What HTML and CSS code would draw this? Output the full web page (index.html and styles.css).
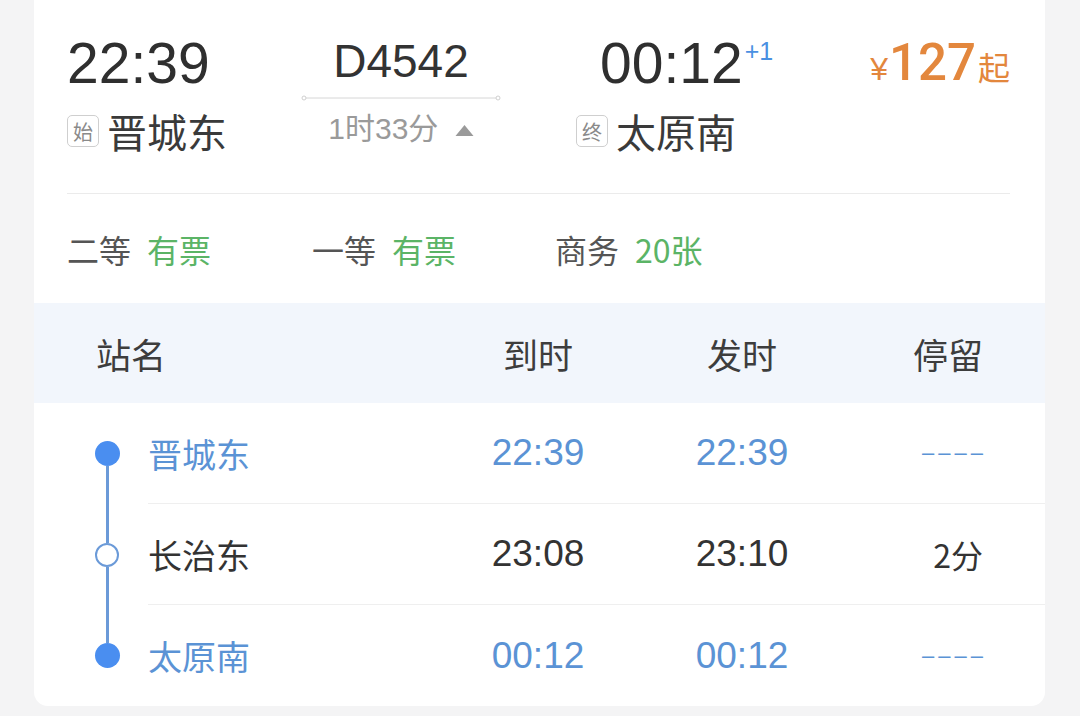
FILE: index.html
```html
<!DOCTYPE html>
<html lang="zh-CN">
<head>
    <meta charset="UTF-8">
    <meta name="viewport" content="width=device-width, initial-scale=1.0">
    <title>D4542 经停信息</title>
    <link rel="stylesheet" href="styles.css">
</head>
<body>

<div class="card">
    <div class="summary">
        <div class="trip">
            <div class="end">
                <div class="time">22:39</div>
                <div class="station"><span class="tag">始</span>晋城东</div>
            </div>
            <div class="mid">
                <div class="train">D4542</div>
                <svg class="track" width="200" height="6" viewBox="0 0 200 6">
                    <line x1="3" y1="3" x2="197" y2="3" stroke="#d6d6d6" stroke-width="1"/>
                    <circle cx="3" cy="3" r="2" fill="#fff" stroke="#d0d0d0" stroke-width="1"/>
                    <circle cx="197" cy="3" r="2" fill="#fff" stroke="#d0d0d0" stroke-width="1"/>
                </svg>
                <div class="dur">1时33分
                    <svg class="arrow" width="19" height="13" viewBox="0 0 19 13"><polygon points="9.5,1 18.5,12 0.5,12" fill="#9a9a9a"/></svg>
                </div>
            </div>
            <div class="end arrive">
                <div class="time">00:12<sup>+1</sup></div>
                <div class="station"><span class="tag">终</span>太原南</div>
            </div>
            <div class="price"><span class="yen">¥</span><span class="amount">127</span><span class="from">起</span></div>
        </div>

        <div class="seats">
            <div class="seat">二等<span class="left">有票</span></div>
            <div class="seat">一等<span class="left">有票</span></div>
            <div class="seat">商务<span class="left">20张</span></div>
        </div>
    </div>

    <div class="stops-head">
        <div>站名</div>
        <div class="c">到时</div>
        <div class="c">发时</div>
        <div class="r">停留</div>
    </div>

    <div class="stop first main">
        <div class="rail"><i class="seg"></i><i class="dot"></i><i class="seg"></i></div>
        <div class="cells">
            <div class="name">晋城东</div>
            <div class="c">22:39</div>
            <div class="c">22:39</div>
            <div class="r dash">––––</div>
        </div>
    </div>
    <div class="stop">
        <div class="rail"><i class="seg"></i><i class="dot open"></i><i class="seg"></i></div>
        <div class="cells">
            <div class="name">长治东</div>
            <div class="c">23:08</div>
            <div class="c">23:10</div>
            <div class="r">2分</div>
        </div>
    </div>
    <div class="stop last main">
        <div class="rail"><i class="seg"></i><i class="dot"></i><i class="seg"></i></div>
        <div class="cells">
            <div class="name">太原南</div>
            <div class="c">00:12</div>
            <div class="c">00:12</div>
            <div class="r dash">––––</div>
        </div>
    </div>
</div>

</body>
</html>
```

FILE: styles.css
```css
body {
    margin: 0;
    background-color: #f4f4f5;
    font-family: "Liberation Sans", "Noto Sans CJK SC", sans-serif;
    color: #333;
}
.card {
    margin: 0 35px 0 34px;
    height: 706px;
    background-color: #fff;
    border-radius: 0 0 14px 14px;
    overflow: hidden;
}
.summary {
    padding: 33px 35px 0 33px;
}
.trip {
    display: flex;
    align-items: flex-start;
}
.end {
    width: 234px;
}
.end.arrive {
    width: auto;
    margin-left: 75px;
}
.arrive .time {
    padding-left: 24px;
}
.time {
    font-size: 57px;
    line-height: 60px;
    color: #2f2f2f;
}
.time sup {
    font-size: 25px;
    line-height: 26px;
    color: #4a90e2;
    vertical-align: top;
    position: relative;
    top: 5px;
    margin-left: 2px;
}
.station {
    display: flex;
    align-items: center;
    margin-top: 13px;
    height: 50px;
    font-family: "Noto Sans CJK SC", sans-serif;
    font-size: 40px;
    color: #3a3a3a;
}
.tag {
    display: inline-flex;
    align-items: center;
    justify-content: center;
    box-sizing: border-box;
    width: 32px;
    height: 32px;
    margin-right: 8px;
    border: 1.5px solid #cfcfcf;
    border-radius: 5px;
    font-size: 20px;
    color: #8a8a8a;
}
.mid {
    width: 200px;
    text-align: center;
}
.train {
    font-size: 46px;
    line-height: 56px;
    color: #333;
}
.track {
    display: block;
    margin-top: 6px;
}
.dur {
    margin-top: 10px;
    font-size: 30px;
    line-height: 36px;
    color: #9a9a9a;
}
.arrow {
    margin-left: 8px;
    vertical-align: 2px;
}
.price {
    margin-left: auto;
    color: #e3873d;
    line-height: 60px;
    white-space: nowrap;
}
.yen {
    font-size: 32px;
}
.amount {
    font-family: Roboto, "Liberation Sans", sans-serif;
    font-weight: 500;
    font-size: 51px;
    margin-left: 1px;
}
.from {
    font-family: "Noto Sans CJK SC", sans-serif;
    font-size: 32px;
    margin-left: 2px;
}
.seats {
    display: grid;
    grid-template-columns: 245px 243px auto;
    align-items: center;
    height: 109px;
    margin-top: 37px;
    border-top: 1px solid #ebebeb;
    font-family: "Noto Sans CJK SC", sans-serif;
    font-size: 32px;
    color: #555;
}
.seat .left {
    margin-left: 16px;
    color: #5bb466;
}
.stops-head,
.cells {
    display: grid;
    align-items: center;
}
.stops-head {
    grid-template-columns: 340px 204px 204px 139px;
    height: 100px;
    padding: 0 62px;
    background-color: #f2f6fc;
    font-family: "Noto Sans CJK SC", sans-serif;
    font-size: 35px;
    color: #3d3d3d;
}
.c {
    text-align: center;
}
.r {
    text-align: right;
}
.stop {
    display: flex;
    height: 101px;
}
.rail {
    width: 114px;
    display: flex;
    flex-direction: column;
    align-items: center;
    padding-left: 32px;
    box-sizing: border-box;
}
.seg {
    flex: 1;
    width: 3px;
    background-color: #6b9ad8;
}
.first .seg:first-child,
.last .seg:last-child {
    visibility: hidden;
}
.dot {
    width: 25px;
    height: 25px;
    border-radius: 50%;
    background-color: #4a8ef0;
}
.dot.open {
    box-sizing: border-box;
    width: 24px;
    height: 24px;
    background-color: #fff;
    border: 2.5px solid #6b9ad8;
}
.cells {
    flex: 1;
    grid-template-columns: 288px 204px 204px 139px 62px;
    border-bottom: 1px solid #efefef;
    font-size: 37px;
    color: #333;
}
.last .cells {
    border-bottom: none;
}
.cells .name {
    font-family: "Noto Sans CJK SC", sans-serif;
    font-size: 34px;
}
.cells .r {
    font-family: "Noto Sans CJK SC", sans-serif;
    font-size: 32px;
}
.cells .r.dash {
    font-family: "Liberation Sans", sans-serif;
    font-size: 22px;
    letter-spacing: 4px;
    margin-right: -4px;
}
.main .cells {
    color: #5b93d5;
}
```
